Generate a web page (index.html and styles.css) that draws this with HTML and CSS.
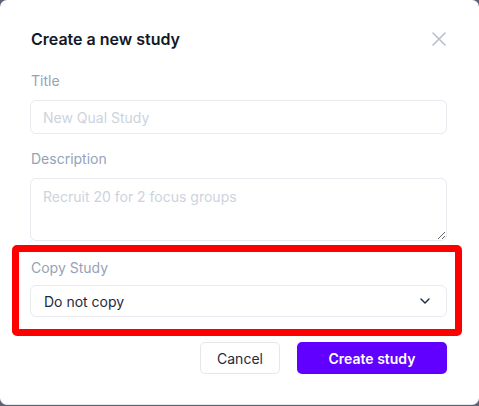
FILE: index.html
```html
<!DOCTYPE html>
<html lang="en">
<head>
    <meta charset="UTF-8">
    <meta name="viewport" content="width=device-width, initial-scale=1.0">
    <title>Create a new study</title>
    <link rel="stylesheet" href="styles.css">
</head>
<body>
    <div class="modal">
        <div class="modal-header">
            <h2>Create a new study</h2>
            <button class="close" aria-label="Close">
                <svg width="14" height="14" viewBox="0 0 14 14">
                    <path d="M1 1 L13 13 M13 1 L1 13" stroke="#b6bfcd" stroke-width="1.6" fill="none" stroke-linecap="round"/>
                </svg>
            </button>
        </div>

        <label class="field-label">Title</label>
        <input type="text" class="field" placeholder="New Qual Study">

        <label class="field-label desc-label">Description</label>
        <textarea class="field area" placeholder="Recruit 20 for 2 focus groups"></textarea>

        <!-- bloque resaltado -->
        <div class="highlight">
            <label class="field-label">Copy Study</label>
            <div class="select">
                <span>Do not copy</span>
                <svg width="10" height="6" viewBox="0 0 10 6">
                    <path d="M1 1 L5 5 L9 1" stroke="#1e293b" stroke-width="1.4" fill="none" stroke-linecap="round" stroke-linejoin="round"/>
                </svg>
            </div>
        </div>

        <div class="actions">
            <button class="btn btn-cancel">Cancel</button>
            <button class="btn btn-primary">Create study</button>
        </div>
    </div>
</body>
</html>
```

FILE: styles.css
```css
html, body {
    margin: 0;
    padding: 0;
}

body {
    font-family: Inter, "Noto Sans", sans-serif;
    background-color: #5b6274;
    width: 479px;
    height: 406px;
    overflow: hidden;
}

.modal {
    background-color: #ffffff;
    width: 479px;
    height: 405px;
    box-sizing: border-box;
    border-radius: 7px;
    border-bottom: 1px solid #e5e7eb;
    padding: 27px 32px 0 30px;
    display: flex;
    flex-direction: column;
}

.modal-header {
    display: flex;
    justify-content: space-between;
    align-items: center;
    height: 24px;
}

.modal-header h2 {
    margin: 0 0 0 1px;
    font-size: 16px;
    font-weight: 600;
    color: #111827;
    line-height: 24px;
}

.close {
    background: none;
    border: none;
    padding: 0;
    margin-right: 1px;
    display: flex;
    cursor: pointer;
}

.field-label {
    display: block;
    font-size: 14px;
    line-height: 20px;
    color: #94a3b8;
    margin: 20px 0 9px 1px;
}

.desc-label {
    margin-top: 15px;
}

.field {
    font-family: inherit;
    font-size: 14px;
    color: #1e293b;
    border: 1px solid #e8eaef;
    border-radius: 6px;
    padding: 0 12px;
    height: 34px;
    box-sizing: border-box;
    width: 100%;
    outline: none;
}

.field::placeholder {
    color: #cdd3dd;
}

.area {
    height: 63px;
    padding-top: 9px;
    resize: vertical;
}

.highlight {
    margin: 4px -15px 0 -18px;
    border: 7px solid #ff0000;
    border-radius: 5px;
    padding: 0 8px 12px 11px;
}

.highlight .field-label {
    margin-top: 6px;
    margin-bottom: 7px;
}

.select {
    display: flex;
    justify-content: space-between;
    align-items: center;
    height: 32px;
    box-sizing: border-box;
    border: 1px solid #e8eaef;
    border-radius: 6px;
    padding: 0 16px 0 13px;
    font-size: 14px;
    color: #1e293b;
}

.actions {
    display: flex;
    justify-content: flex-end;
    gap: 17px;
    margin-top: 6px;
}

.btn {
    font-family: inherit;
    font-size: 14px;
    height: 32px;
    border-radius: 5px;
    cursor: pointer;
}

.btn-cancel {
    width: 80px;
    background-color: #ffffff;
    border: 1px solid #e5e7eb;
    color: #1e293b;
}

.btn-primary {
    width: 150px;
    background-color: #6200ff;
    border: none;
    color: #ffffff;
    font-weight: 600;
}
```
